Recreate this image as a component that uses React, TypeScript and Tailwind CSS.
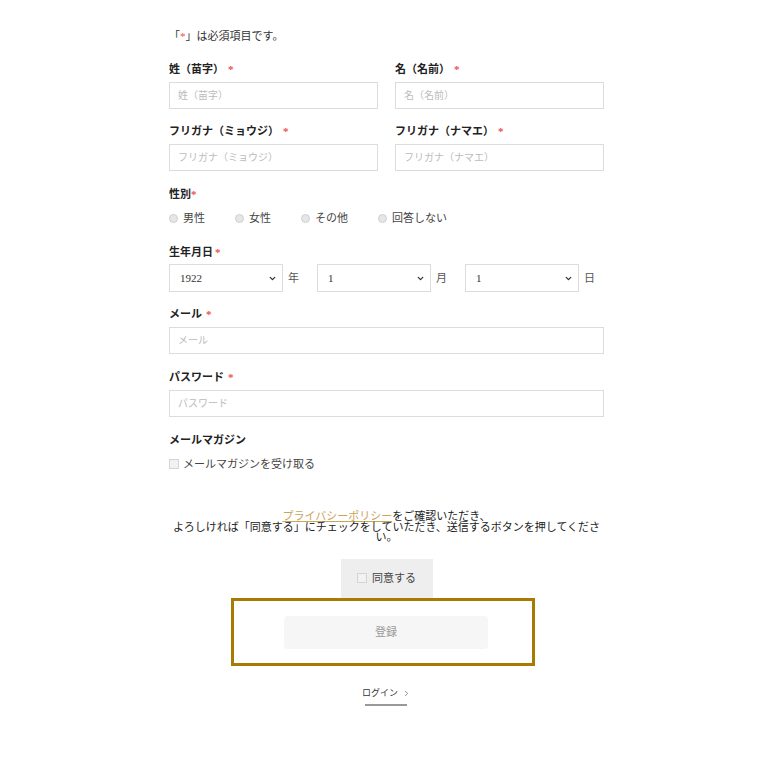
import { ChevronDown, ChevronRight } from "lucide-react";

const font = { fontFamily: '"Liberation Serif", "Noto Sans CJK JP", serif' };

function Req() {
  return <span className="ml-1 text-[#e8514a]">*</span>;
}

function Label({ children, req = true }: { children: React.ReactNode; req?: boolean }) {
  return (
    <div className="h-4 text-[11px] font-bold leading-4 text-[#222]">
      {children}
      {req && <Req />}
    </div>
  );
}

function Input({ placeholder, className = "" }: { placeholder: string; className?: string }) {
  return (
    <input
      placeholder={placeholder}
      className={`mt-[5px] block h-[27px] w-full border border-[#dcdcdc] bg-white px-2 text-[10px] text-[#333] placeholder:text-[#bbb] outline-none ${className}`}
      style={font}
    />
  );
}

function Select({ value, unit }: { value: string; unit: string }) {
  return (
    <div className="flex items-center">
      <div className="relative h-[28px] w-[114px]">
        <select
          defaultValue={value}
          className="h-full w-full appearance-none border border-[#dcdcdc] bg-white pl-[10px] text-[11px] text-[#333] outline-none"
          style={font}
        >
          <option>{value}</option>
        </select>
        <ChevronDown
          size={9}
          strokeWidth={3.5}
          className="pointer-events-none absolute right-[6px] top-[10px] text-[#333]"
        />
      </div>
      <span className="ml-[5px] w-[29px] text-[11px] text-[#555]">{unit}</span>
    </div>
  );
}

function Radio({ label }: { label: string }) {
  return (
    <div className="flex items-center gap-[5px]">
      <span className="h-[9px] w-[9px] rounded-full border border-[#cfcfcf] bg-[#e6e6e6]" />
      <span className="text-[11px] text-[#444]">{label}</span>
    </div>
  );
}

function Check() {
  return <span className="h-[10px] w-[10px] border border-[#d4d4d4] bg-[#f2f2f2]" />;
}

export default function App() {
  return (
    <div className="min-h-[768px] w-full bg-white" style={font}>
      <div className="ml-[169px] w-[435px] pt-[28px]">
        <p className="h-4 text-[11px] leading-4 text-[#333]">
          「<span className="text-[#e8514a]">*</span>」は必須項目です。
        </p>

        <div className="mt-[17px] grid grid-cols-2 gap-x-[17px]">
          <div>
            <Label>姓（苗字）</Label>
            <Input placeholder="姓（苗字）" />
          </div>
          <div>
            <Label>名（名前）</Label>
            <Input placeholder="名（名前）" />
          </div>
        </div>

        <div className="mt-[14px] grid grid-cols-2 gap-x-[17px]">
          <div>
            <Label>フリガナ（ミョウジ）</Label>
            <Input placeholder="フリガナ（ミョウジ）" />
          </div>
          <div>
            <Label>フリガナ（ナマエ）</Label>
            <Input placeholder="フリガナ（ナマエ）" />
          </div>
        </div>

        <div className="mt-[15px]">
          <div className="h-4 text-[11px] font-bold leading-4 text-[#222]">
            性別<span className="text-[#e8514a]">*</span>
          </div>
          <div className="mt-2 flex h-4 items-center gap-[30px]">
            <Radio label="男性" />
            <Radio label="女性" />
            <Radio label="その他" />
            <Radio label="回答しない" />
          </div>
        </div>

        <div className="mt-[18px]">
          <div className="h-4 text-[11px] font-bold leading-4 text-[#222]">
            生年月日<span className="ml-0.5 text-[#e8514a]">*</span>
          </div>
          <div className="mt-1 flex">
            <Select value="1922" unit="年" />
            <Select value="1" unit="月" />
            <Select value="1" unit="日" />
          </div>
        </div>

        <div className="mt-[14px]">
          <Label>メール</Label>
          <Input placeholder="メール" />
        </div>

        <div className="mt-[15px]">
          <Label>パスワード</Label>
          <Input placeholder="パスワード" className="h-[26px]" />
        </div>

        <div className="mt-[15px]">
          <Label req={false}>メールマガジン</Label>
          <div className="mt-2 flex h-4 items-center gap-[4px]">
            <Check />
            <span className="text-[11px] text-[#444]">メールマガジンを受け取る</span>
          </div>
        </div>

        <p className="mt-[39px] text-center text-[11px] leading-[10.5px] text-[#222]">
          <span className="text-[#c9a55c] underline underline-offset-1">プライバシーポリシー</span>
          をご確認いただき、
          <br />
          よろしければ「同意する」にチェックをしていただき、送信するボタンを押してください。
        </p>

        <div className="mt-[16px] flex justify-center">
          <div className="flex h-[39px] w-[92px] items-center justify-center gap-[5px] bg-[#eeeeee]">
            <Check />
            <span className="text-[11px] text-[#444]">同意する</span>
          </div>
        </div>

        <div className="ml-[62px] w-[304px] border-[3px] border-[#a87b05] px-[50px] pb-[14px] pt-[15px]">
          <div className="flex h-[33px] w-[204px] items-center justify-center rounded-sm bg-[#f6f6f6] text-[11px] text-[#999]">
            登録
          </div>
        </div>

        <div className="mt-[21px] flex justify-center">
          <div className="flex flex-col items-center">
            <div className="flex items-center gap-[4px] px-[1px] text-[9px] text-[#333]">
              ログイン
              <ChevronRight size={9} strokeWidth={1.5} />
            </div>
            <div className="mt-[4px] h-[2px] w-[42px] bg-[#999]" />
          </div>
        </div>
      </div>
    </div>
  );
}
